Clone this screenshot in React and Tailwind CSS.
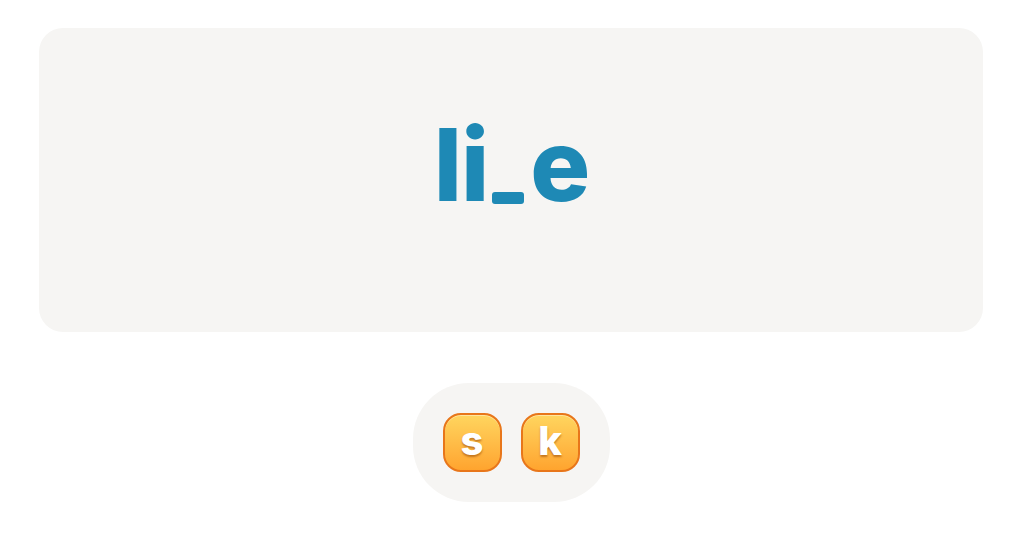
import React from 'react';

const letters = ['s', 'k'];

const Tile = ({ letter }) => (
  <button
    type="button"
    className="flex h-[59px] w-[59px] items-center justify-center rounded-[18px] border-[2.5px] border-[#e8761a] bg-gradient-to-b from-[#ffd55e] to-[#ffa42e] shadow-[inset_0_1px_0_rgba(255,255,255,0.4)]"
  >
    <span
      className="-mt-[4px] text-[40px] font-extrabold leading-none text-white [text-shadow:0_2px_2px_rgba(140,60,0,0.5)]"
      style={{ fontFamily: 'Inter, "Noto Sans", sans-serif' }}
    >
      {letter}
    </span>
  </button>
);

export default function App() {
  return (
    <div className="min-h-screen bg-white px-[39px] pt-[28px]" style={{ fontFamily: 'Inter, "Noto Sans", sans-serif' }}>
      <div className="flex h-[304px] items-center justify-center rounded-[24px] bg-[#f6f5f3] pb-[30px]">
        <div className="flex items-end text-[#1e89b5]">
          <span className="text-[100px] font-extrabold leading-none tracking-[-1px]">li</span>
          <span className="mb-[11px] ml-[4px] mr-[6px] h-[12px] w-[32px] rounded-[3px] bg-[#1e89b5]" />
          <span className="text-[100px] font-extrabold leading-none tracking-[-2px]">e</span>
        </div>
      </div>
      <div className="mt-[51px] flex justify-center">
        <div className="flex gap-[19px] rounded-[56px] bg-[#f6f5f3] p-[30px]">
          {letters.map((l) => (
            <Tile key={l} letter={l} />
          ))}
        </div>
      </div>
    </div>
  );
}
